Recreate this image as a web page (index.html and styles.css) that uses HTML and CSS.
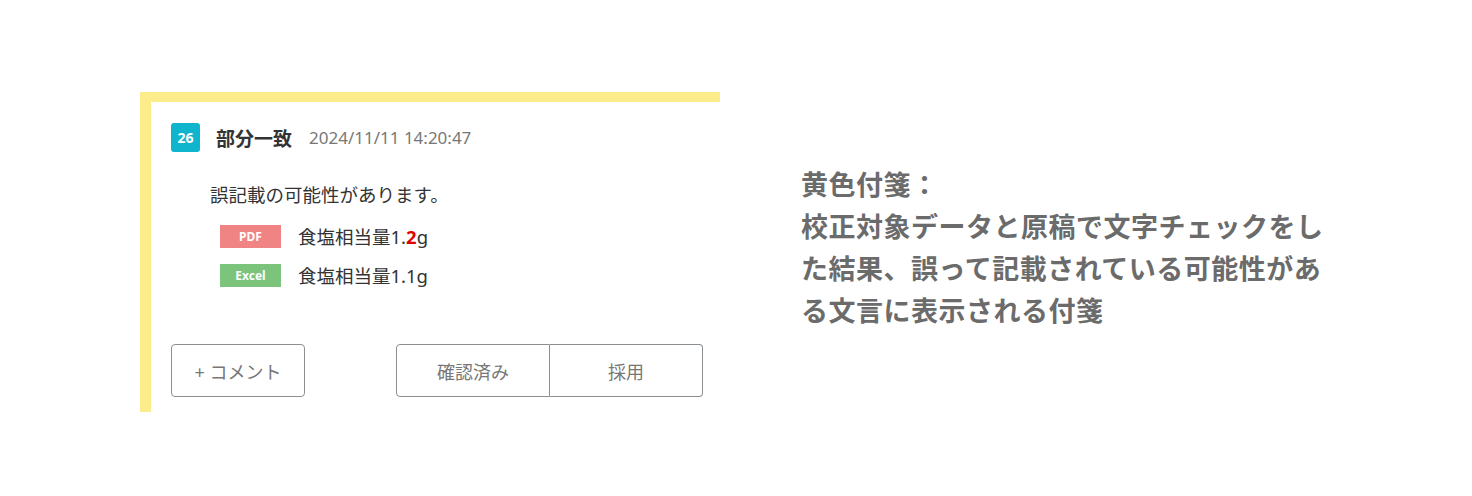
FILE: index.html
```html
<!DOCTYPE html>
<html lang="ja">
<head>
    <meta charset="utf-8">
    <title>黄色付箋</title>
    <link rel="stylesheet" href="styles.css">
</head>
<body>
    <div class="page">
        <div class="note">
            <div class="note-head">
                <span class="num">26</span>
                <span class="title">部分一致</span>
                <span class="date">2024/11/11 14:20:47</span>
            </div>

            <div class="note-body">
                <p class="message">誤記載の可能性があります。</p>
                <div class="compare">
                    <div class="row">
                        <span class="src src-pdf">PDF</span>
                        <span class="value">食塩相当量1.<b class="diff">2</b>g</span>
                    </div>
                    <div class="row">
                        <span class="src src-excel">Excel</span>
                        <span class="value">食塩相当量1.1g</span>
                    </div>
                </div>
            </div>

            <div class="note-foot">
                <button class="btn">+ コメント</button>
                <div class="btn-group">
                    <button class="btn">確認済み</button>
                    <button class="btn">採用</button>
                </div>
            </div>
        </div>

        <div class="desc">
            黄色付箋：<br>
            校正対象データと原稿で文字チェックをし<br>
            た結果、誤って記載されている可能性があ<br>
            る文言に表示される付箋
        </div>
    </div>
</body>
</html>
```

FILE: styles.css
```css
body { margin: 0; background: #fff; font-family: "Noto Sans", "Noto Sans CJK JP", sans-serif; color: #333; }
.page { display: flex; align-items: center; gap: 81px; padding: 92px 0 0 140px; }

.note { width: 532px; border-top: 10px solid #fdec8b; border-left: 11px solid #fdec8b; padding: 21px 17px 15px 20px; }
.note-head { display: flex; align-items: center; height: 29px; }
.num { width: 29px; height: 29px; border-radius: 3px; background: #0fb5cd; color: #fff; font-size: 14px; font-weight: bold; display: flex; align-items: center; justify-content: center; }
.title { margin-left: 16px; font-size: 19px; font-weight: bold; color: #333; }
.date { margin-left: 17px; font-size: 17px; color: #777; }

.note-body { padding-left: 39px; margin-top: 29px; }
.message { margin: 0; font-size: 18.5px; line-height: 28px; }
.compare { padding-left: 10px; margin-top: 13px; display: flex; flex-direction: column; gap: 11px; }
.row { display: flex; align-items: center; height: 28px; }
.src { width: 61px; height: 23px; color: #fff; font-size: 12px; font-weight: bold; display: flex; align-items: center; justify-content: center; }
.src-pdf { background: #f08484; }
.src-excel { background: #7cc37c; }
.value { margin-left: 17px; font-size: 18.5px; }
.diff { color: #e00000; }

.note-foot { display: flex; justify-content: space-between; margin-top: 55px; }
.btn { height: 53px; background: #fff; border: 1px solid #8a8f94; border-radius: 4px; font-family: inherit; font-size: 18px; color: #777; padding: 0; width: 134px; }
.btn-group { display: flex; }
.btn-group .btn { width: 154px; border-radius: 0; }
.btn-group .btn:first-child { border-radius: 4px 0 0 4px; }
.btn-group .btn:last-child { border-left: none; border-radius: 0 4px 4px 0; width: 153px; }

.desc { font-size: 27px; line-height: 42px; letter-spacing: 0.5px; font-weight: bold; color: #6b6b6b; margin-bottom: 8px; }
```
